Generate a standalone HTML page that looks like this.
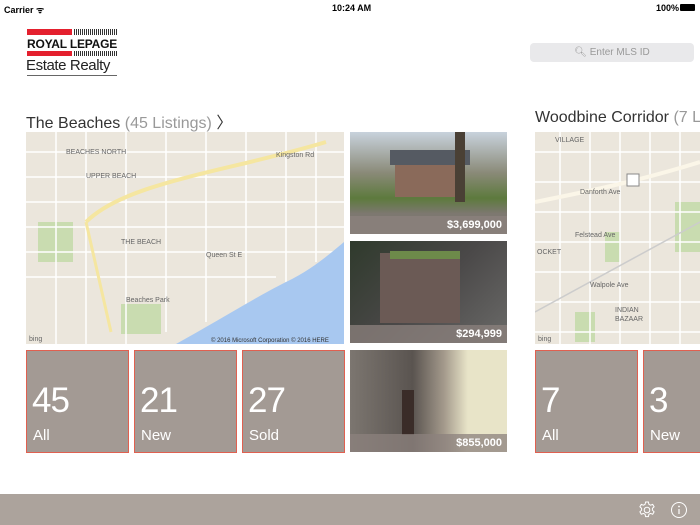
<!DOCTYPE html>
<html><head><meta charset="utf-8"><style>
*{margin:0;padding:0;box-sizing:border-box}
body{width:700px;height:525px;overflow:hidden;background:#fff;font-family:"Liberation Sans",sans-serif;position:relative}
.abs{position:absolute}
.sb{font-size:9px;font-weight:bold;color:#000;top:3px}
.title{font-size:16px;color:#333;top:109px}
.title span{color:#999}
.tile{position:absolute;top:350px;width:103px;height:103px;background:#a39a94;border:1px solid #e06050;color:#fff}
.tile .n{position:absolute;left:5px;top:30px;font-size:35px;letter-spacing:-1px}
.tile .l{position:absolute;left:6px;top:76px;font-size:15px}
.photo{position:absolute;left:350px;width:157px;height:102px;overflow:hidden}
.price{position:absolute;bottom:0;left:0;right:0;height:18px;background:rgba(140,130,125,.75);color:#fff;font-size:11px;font-weight:bold;text-align:right;padding:3px 5px}
.map{position:absolute;top:132px;height:212px;background:#ebe6dc;overflow:hidden}
</style></head><body>
<div class="abs sb" style="left:4px">Carrier ᯤ</div>
<div class="abs sb" style="left:332px">10:24 AM</div>
<div class="abs sb" style="left:656px">100%</div>
<div class="abs" style="left:680px;top:4px;width:15px;height:7px;background:#000;border-radius:1px"></div>

<div class="abs" style="left:27px;top:29px;width:45px;height:6px;background:#e4202e"></div>
<div class="abs" style="left:74px;top:29px;width:44px;height:6px;background:repeating-linear-gradient(90deg,#333 0 1px,#fff 1px 2px)"></div>
<div class="abs" style="left:27px;top:37px;font-size:12px;font-weight:bold;color:#111;letter-spacing:-.2px">ROYAL LEPAGE</div>
<div class="abs" style="left:27px;top:51px;width:45px;height:5px;background:#e4202e"></div>
<div class="abs" style="left:74px;top:51px;width:44px;height:5px;background:repeating-linear-gradient(90deg,#333 0 1px,#fff 1px 2px)"></div>
<div class="abs" style="left:26px;top:57px;font-size:15px;color:#222;letter-spacing:-.4px">Estate Realty</div>
<div class="abs" style="left:27px;top:75px;width:90px;height:1px;background:#666"></div>

<div class="abs" style="left:530px;top:43px;width:164px;height:19px;background:#e9e9eb;border-radius:4px;color:#999;font-size:10px;text-align:center;line-height:19px">&#x1F50D;&#xFE0E; Enter MLS ID</div>

<div class="abs title" style="left:26px">The Beaches <span>(45 Listings)</span> 〉</div>
<div class="abs title" style="left:535px;white-space:nowrap">Woodbine Corridor <span>(7 L</span></div>

<div class="map" style="left:26px;width:318px">
<svg width="318" height="212">
<rect x="95" y="172" width="40" height="30" fill="#c9dcb0"/><rect x="12" y="90" width="35" height="40" fill="#c9dcb0"/>
<g stroke="#fff" stroke-width="1.5" fill="none">
<path d="M0 20 H318 M0 45 H318 M0 70 H318 M0 95 H318 M0 120 H318 M0 145 H250"/>
<path d="M30 0 V212 M60 0 V212 M100 0 V212 M140 0 V200 M180 0 V190 M220 0 V180 M260 0 V150 M290 0 V130"/>
</g>
<path d="M150 212 C190 190 230 165 260 150 C285 138 300 125 318 110 L318 212Z" fill="#a8c8f0"/>
<path d="M60 90 C100 50 200 40 300 10" stroke="#f5e6a0" stroke-width="4" fill="none"/>
<path d="M60 90 L85 200" stroke="#f5e6a0" stroke-width="3" fill="none"/>
<g font-size="7" fill="#666" font-family="Liberation Sans"><text x="40" y="22">BEACHES NORTH</text><text x="60" y="46">UPPER BEACH</text><text x="95" y="112">THE BEACH</text><text x="180" y="125">Queen St E</text><text x="250" y="25">Kingston Rd</text><text x="100" y="170">Beaches Park</text><text x="185" y="210" font-size="6" fill="#333">© 2016 Microsoft Corporation © 2016 HERE</text><text x="3" y="209">bing</text></g>
</svg></div>

<div class="map" style="left:535px;width:165px">
<svg width="165" height="212">
<rect x="70" y="100" width="15" height="30" fill="#c9dcb0"/><rect x="140" y="70" width="25" height="50" fill="#c9dcb0"/><rect x="40" y="180" width="20" height="30" fill="#c9dcb0"/>
<g stroke="#fff" stroke-width="1.5" fill="none"><path d="M0 20 H165 M0 50 H165 M0 80 H165 M0 110 H165 M0 140 H165 M0 170 H165 M0 200 H165 M25 0 V212 M55 0 V212 M85 0 V212 M115 0 V212 M145 0 V212"/></g>
<path d="M0 70 C50 60 100 50 165 30" stroke="#fbf6e8" stroke-width="4" fill="none"/>
<path d="M0 180 L165 90" stroke="#ccc" stroke-width="1.5" fill="none"/>
<rect x="92" y="42" width="12" height="12" fill="#fff" stroke="#888"/>
<g font-size="7" fill="#666"><text x="20" y="10">VILLAGE</text><text x="45" y="62">Danforth Ave</text><text x="40" y="105">Felstead Ave</text><text x="55" y="155">Walpole Ave</text><text x="2" y="122">OCKET</text><text x="80" y="180">INDIAN</text><text x="80" y="189">BAZAAR</text><text x="3" y="209">bing</text></g>
</svg></div>

<div class="photo" style="top:132px;background:linear-gradient(#c8d2dc 0%,#8a8a78 40%,#5d7a3d 65%,#7d7870 80%)">
<div class="abs" style="left:45px;top:30px;width:70px;height:35px;background:#8a6a5a"></div>
<div class="abs" style="left:40px;top:18px;width:80px;height:15px;background:#555a62"></div>
<div class="abs" style="left:105px;top:0;width:10px;height:70px;background:#4a4035"></div>
<div class="price">$3,699,000</div></div>
<div class="photo" style="top:241px;background:linear-gradient(135deg,#2f3a2c,#4a4848 50%,#6a6a68)">
<div class="abs" style="left:30px;top:12px;width:80px;height:70px;background:#6b5a55"></div>
<div class="abs" style="left:40px;top:10px;width:70px;height:8px;background:#6d8a4a"></div>
<div class="price">$294,999</div></div>
<div class="photo" style="top:350px;background:linear-gradient(90deg,#7c7670 0%,#5a5450 40%,#a49a8c 60%,#e8e4c8 75%)">
<div class="abs" style="left:52px;top:40px;width:12px;height:45px;background:#3a2c28"></div>
<div class="price">$855,000</div></div>

<div class="tile" style="left:26px"><div class="n">45</div><div class="l">All</div></div>
<div class="tile" style="left:134px"><div class="n">21</div><div class="l">New</div></div>
<div class="tile" style="left:242px"><div class="n">27</div><div class="l">Sold</div></div>
<div class="tile" style="left:535px"><div class="n">7</div><div class="l">All</div></div>
<div class="tile" style="left:643px"><div class="n">3</div><div class="l">New</div></div>

<div class="abs" style="left:0;top:494px;width:700px;height:31px;background:#aca39c"></div>
<svg class="abs" style="left:637px;top:500px" width="20" height="20" viewBox="0 0 20 20"><path d="M8.6 2h2.8l.5 2.3 1.6.9 2.2-.8 1.4 2.4-1.7 1.6v1.8l1.7 1.6-1.4 2.4-2.2-.8-1.6.9-.5 2.3H8.6l-.5-2.3-1.6-.9-2.2.8-1.4-2.4 1.7-1.6V8.4L2.9 6.8l1.4-2.4 2.2.8 1.6-.9z" fill="none" stroke="#fff" stroke-width="1"/><circle cx="10" cy="10" r="2.8" fill="none" stroke="#fff"/></svg>
<svg class="abs" style="left:670px;top:501px" width="18" height="18"><circle cx="9" cy="9" r="7.5" fill="none" stroke="#fff"/><line x1="9" y1="8" x2="9" y2="13" stroke="#fff" stroke-width="1.2"/><circle cx="9" cy="5.5" r=".9" fill="#fff"/></svg>
</body></html>
